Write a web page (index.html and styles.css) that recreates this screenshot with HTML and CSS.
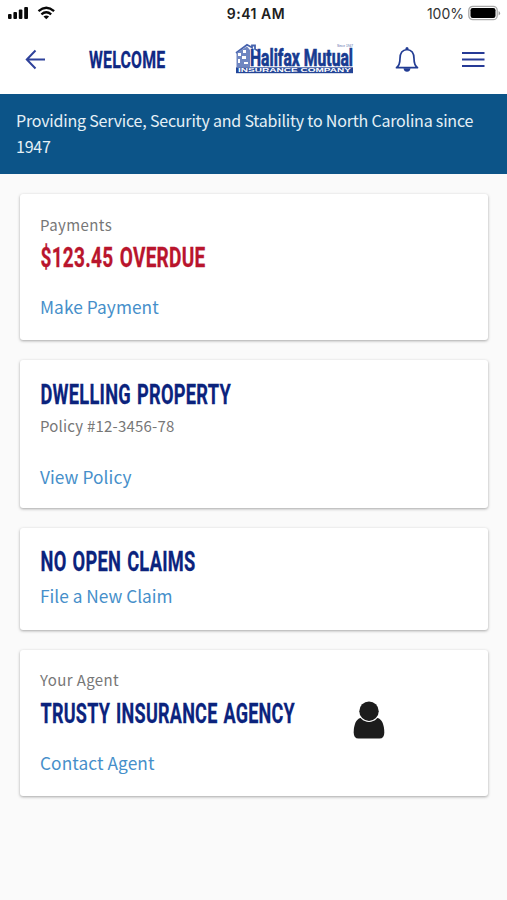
FILE: index.html
```html
<!DOCTYPE html>
<html lang="en">
<head>
<meta charset="utf-8">
<title>Halifax Mutual</title>
<link rel="stylesheet" href="styles.css">
</head>
<body>
<div class="status">
  <svg class="signal" width="50" height="16" viewBox="0 0 50 16">
    <g fill="#080808"><rect x="0" y="8" width="3.6" height="5" rx="1"/><rect x="5.4" y="6" width="3.6" height="7" rx="1"/><rect x="10.8" y="3.5" width="3.6" height="9.5" rx="1"/><rect x="16.2" y="1" width="3.8" height="12" rx="1"/></g>
    <g fill="none" stroke="#080808" stroke-width="2.3"><path d="M30.500 5.100Q38.300-1.700 46.100 5.100"/><path d="M33.400 8.300Q38.300 4.200 43.200 8.300"/></g>
    <path d="M35.500 10.500Q38.300 8.400 41.100 10.500L38.300 13.300Z" fill="#080808"/>
  </svg>
  <span class="clock">9:41 AM</span>
  <span class="charge"><span class="percent">100%</span>
  <svg width="33" height="16" viewBox="0 0 33 16"><rect x=".8" y="1.300" width="28.400" height="13.400" rx="4" fill="#fff" stroke="#aaa" stroke-width="1.300"/><rect x="2.500" y="3" width="25" height="10" rx="2.200" fill="#000"/><path d="M30.600 6v4.500q1.500-.7 1.500-2.250T30.600 6" fill="#999"/></svg></span>
</div>
<header class="bar">
  <svg class="back" width="22" height="22" viewBox="0 0 22 22" fill="none" stroke="#2f429b" stroke-width="2"><path d="M20 10.500H2M10.500 1.500L1.800 10.500L10.500 19.500"/></svg>
  <svg class="welcome" width="80" height="28"><text class="display" x="0" y="21.700" textLength="76.500" lengthAdjust="spacingAndGlyphs">WELCOME</text></svg>
  <svg class="logo" width="120" height="34" viewBox="0 0 120 34">
    <path d="M1 10L12 1.800L17 4.500V2.500H20V6L24 8.500" fill="none" stroke="#4763ad" stroke-width="1.800"/>
    <path d="M1.500 10L12 3.500L15 7V24H1.500Z" fill="#6f86c1"/>
    <path d="M3 10h3v3H3zM8 7h3v3H8zM3 16h2v4H3zM7 13h4v3H7zM9 19h4v2H9z" fill="#fff"/>
    <text class="brand" x="15" y="23.200" textLength="103" lengthAdjust="spacingAndGlyphs">Halifax Mutual</text>
    <rect x="1" y="24.300" width="117" height="5.900" fill="#244597"/>
    <text class="company" x="3" y="29.200" textLength="113" lengthAdjust="spacingAndGlyphs">INSURANCE COMPANY</text>
    <text class="since" x="102" y="4.300" textLength="16" lengthAdjust="spacingAndGlyphs">Since 1947</text>
  </svg>
  <svg class="bell" width="24" height="28" viewBox="0 0 24 28" fill="none" stroke="#223c93" stroke-width="1.700" stroke-linejoin="round"><path d="M1.500 21.700C4.500 19.500 5 17 5 12.500C5 7 7 4 12 3.500C17 4 19 7 19 12.500C19 17 19.500 19.500 22.500 21.700Z"/><circle cx="12" cy="2.600" r="1.500" fill="#223c93" stroke="none"/><path d="M8.500 22.300Q9 25.800 12 25.800T15.500 22.300Z" fill="#223c93" stroke="none"/></svg>
  <svg class="menu" width="24" height="18" viewBox="0 0 24 18" stroke="#263a96" stroke-width="2"><path d="M1 2H23.500M1 8.500H23.500M1 15H23.500"/></svg>
</header>
<div class="banner">Providing Service, Security and Stability to North Carolina since 1947</div>
<main class="cards">
  <section class="card payments">
    <div class="label wide">Payments</div>
    <svg class="title overdue" width="260" height="36"><text class="display" x="0.500" y="31.300" textLength="165" lengthAdjust="spacingAndGlyphs">$123.45 OVERDUE</text></svg>
    <a class="link">Make Payment</a>
  </section>
  <section class="card policy">
    <svg class="title" width="260" height="36"><text class="display" x="0.500" y="31.300" textLength="190.500" lengthAdjust="spacingAndGlyphs">DWELLING PROPERTY</text></svg>
    <div class="label number">Policy #12-3456-78</div>
    <a class="link">View Policy</a>
  </section>
  <section class="card claims">
    <svg class="title" width="260" height="36"><text class="display" x="0.500" y="31.300" textLength="155" lengthAdjust="spacingAndGlyphs">NO OPEN CLAIMS</text></svg>
    <a class="link">File a New Claim</a>
  </section>
  <section class="card agent">
    <div class="details">
      <div class="label wide">Your Agent</div>
      <svg class="title" width="260" height="36"><text class="display" x="0.500" y="31.300" textLength="254.500" lengthAdjust="spacingAndGlyphs">TRUSTY INSURANCE AGENCY</text></svg>
      <a class="link">Contact Agent</a>
    </div>
    <svg class="person" width="32" height="39" viewBox="0 0 32 39"><path d="M7.500 17H24.500C29 18 31.300 24 31.300 31.500Q31.300 37.500 26.500 37.500H5.500Q.7 37.500 .7 31.500C.7 24 3 18 7.500 17Z" fill="#1c1c1c"/><circle cx="16" cy="10.200" r="10.800" fill="#fff"/><circle cx="16" cy="10.200" r="9.700" fill="#1c1c1c"/></svg>
  </section>
</main>
</body>
</html>
```
FILE: styles.css
```css
* { box-sizing: border-box; }
body {
  margin: 0;
  min-height: 900px;
  background: #fafafa;
  font-family: "Noto Sans CJK SC", "Noto Sans", sans-serif;
}
svg { display: block; flex: none; overflow: visible; }
.status {
  height: 28px;
  padding: 0 6px 0 8px;
  display: grid;
  grid-template-columns: 1fr auto 1fr;
  align-items: center;
  background: #fff;
  font-family: Inter, sans-serif;
  color: #202020;
}
.signal { margin-top: -1px; }
.clock { margin: -1px -3px 0 0; font-size: 14px; font-weight: 600; letter-spacing: 0.5px; }
.charge { display: flex; justify-content: flex-end; align-items: center; gap: 4px; margin-top: -2px; }
.percent { font-size: 14px; color: #333; }
.bar {
  height: 66px;
  padding: 0 22px 2px 25px;
  display: flex;
  align-items: center;
  background: #fff;
}
.display {
  font-family: Roboto, sans-serif;
  font-weight: 700;
  font-size: 28.5px;
  letter-spacing: 0.4px;
  word-spacing: 2px;
  fill: #0b237d;
  stroke: #0b237d;
  stroke-width: 0.3px;
}
.welcome { margin-left: 42px; }
.welcome .display { font-size: 24px; fill: #102a86; }
.logo { margin-left: 66px; }
.brand { font: 700 24px Roboto, sans-serif; fill: #173b91; stroke: #173b91; stroke-width: 0.7; }
.company { font: 700 6px "Liberation Sans", sans-serif; fill: #fff; }
.since { font: 4px "Liberation Sans", sans-serif; fill: #536aaa; }
.bell { margin-left: 39.5px; }
.menu { margin-left: auto; }
.banner {
  height: 80px;
  padding: 13px 15px 0 16px;
  background: #0c5488;
  color: #e5f0f6;
  font-size: 16px;
  line-height: 26px;
  letter-spacing: -0.2px;
}
.cards { padding: 20px 19px 0 20px; display: flex; flex-direction: column; gap: 20px; }
.card {
  padding: 0 20px;
  background: #fff;
  border-radius: 3px;
  box-shadow: 0 1px 3px rgba(0, 0, 0, 0.34);
}
.payments { height: 146px; padding-top: 18px; }
.policy { height: 148px; padding-top: 13px; }
.claims { height: 102px; padding-top: 12px; }
.agent { height: 146px; padding-top: 18px; display: flex; }
.details { width: 312.5px; }
.person { margin-top: 33px; }
.label { font-size: 15px; line-height: 24px; color: #777; letter-spacing: 0.2px; }
.label.wide { letter-spacing: 0.4px; }
.payments .label { padding-top: 1px; margin-bottom: -1px; }
.title { display: block; }
.overdue .display { fill: #b9152d; stroke: #b9152d; }
.link { display: block; font-size: 17.3px; line-height: 28px; color: #468fca; letter-spacing: 0.08px; }
.payments .link { margin-top: 21px; }
.agent .link { margin-top: 21px; }
.number { margin-top: 5px; }
.policy .link { margin-top: 25px; }
.claims .link { margin-top: 6px; letter-spacing: 0; }
```
